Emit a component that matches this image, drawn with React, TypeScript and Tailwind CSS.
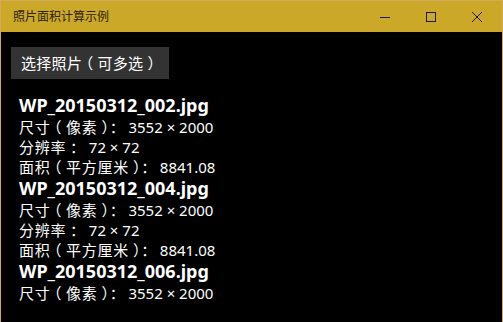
import React from 'react';

const files = ['WP_20150312_002.jpg', 'WP_20150312_004.jpg', 'WP_20150312_006.jpg'];

const font = { fontFamily: '"Segoe UI", "Noto Sans", "Noto Sans CJK SC", sans-serif' };

// full-width punctuation sits off-centre in Noto CJK SC; nudge it to the middle like YaHei
const L = () => <span className="relative left-[-4px]">（</span>;
const R = () => <span className="relative left-[4px]">）</span>;
const C = () => <span className="relative left-[4px]">：</span>;

export default function App() {
  return (
    <div
      className="w-[503px] h-[322px] overflow-hidden flex flex-col border-x border-t border-[#d6a85c] bg-black"
      style={font}
    >
      {/* Title bar */}
      <div className="h-[31px] shrink-0 flex items-center bg-[#cca829]">
        <span className="pl-3 text-[12px] text-[#2a2408]">照片面积计算示例</span>
        <div className="ml-auto flex h-full pr-[2px]">
          <div className="w-[46px] flex items-center justify-center">
            <svg width="10" height="10" viewBox="0 0 10 10">
              <path d="M0 5.5h10" stroke="#1a1a1a" strokeWidth="1" />
            </svg>
          </div>
          <div className="w-[46px] flex items-center justify-center">
            <svg width="10" height="10" viewBox="0 0 10 10">
              <rect x="0.5" y="0.5" width="9" height="9" fill="none" stroke="#1a1a1a" strokeWidth="1" />
            </svg>
          </div>
          <div className="w-[46px] flex items-center justify-center">
            <svg width="10" height="10" viewBox="0 0 10 10">
              <path d="M0 0L10 10M10 0L0 10" stroke="#1a1a1a" strokeWidth="1" />
            </svg>
          </div>
        </div>
      </div>

      {/* Content */}
      <div className="flex-1 pl-[10px] pt-[15px]">
        <button className="h-[32px] px-[10px] bg-[#333333] text-white text-[15px] leading-none tracking-[0.3px]">
          选择照片<L />可多选<R />
        </button>
        <div className="mt-[15px] pl-[8px] text-white h-[209px] overflow-hidden">
          {files.map((f) => (
            <div key={f}>
              <div className="text-[18px] font-bold leading-[23px]">{f}</div>
              <div className="text-[15px] leading-[20px]">
                <span className="tracking-[0.7px]">尺寸<L />像素<R /><C /></span>
                <span className="ml-[7px]">3552 × 2000</span>
              </div>
              <div className="text-[15px] leading-[20px]">
                <span className="tracking-[0.7px]">分辨率<C /></span>
                <span className="ml-[7px]">72 × 72</span>
              </div>
              <div className="text-[15px] leading-[20px]">
                <span className="tracking-[0.7px]">面积<L />平方厘米<R /><C /></span>
                <span className="ml-[7px]">8841.08</span>
              </div>
            </div>
          ))}
        </div>
      </div>
    </div>
  );
}
